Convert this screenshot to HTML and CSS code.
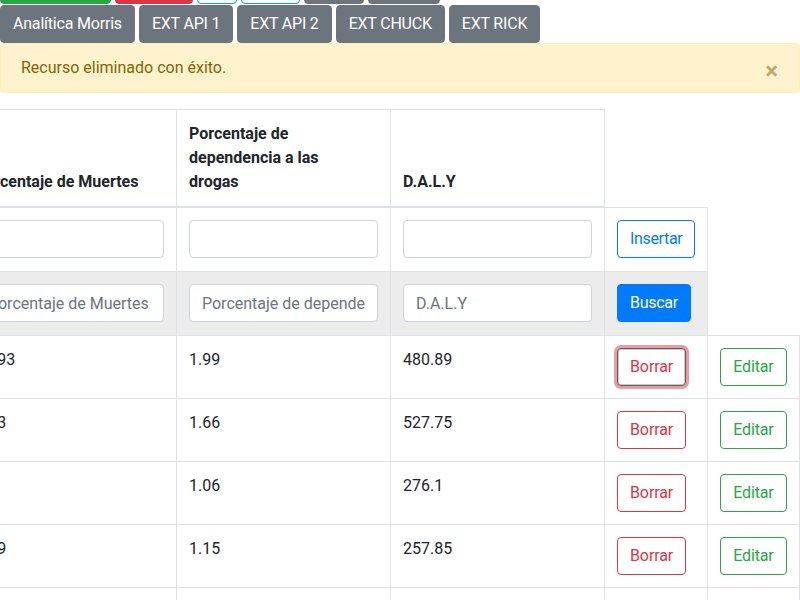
FILE: index.html
```html
<!DOCTYPE html>
<html lang="es">
<head>
<meta charset="utf-8">
<title>Drogas</title>
<link rel="stylesheet" href="styles.css">
</head>
<body>
<div class="page">
  <div class="btn-row">
    <button class="btn btn-success w-a">Inicio datos</button>
    <button class="btn btn-danger w-b">Borrar todo</button>
    <button class="btn btn-outline-info w-c">&lt;</button>
    <button class="btn btn-outline-info w-d">&gt;</button>
    <button class="btn btn-secondary w-e">Gráfica</button>
    <button class="btn btn-secondary w-f">Analítica</button>
  </div>
  <div class="btn-row">
    <button class="btn btn-secondary">Analítica Morris</button>
    <button class="btn btn-secondary">EXT API 1</button>
    <button class="btn btn-secondary">EXT API 2</button>
    <button class="btn btn-secondary">EXT CHUCK</button>
    <button class="btn btn-secondary">EXT RICK</button>
  </div>

  <div class="alert">
    <span>Recurso eliminado con éxito.</span>
    <button class="close" aria-label="Cerrar">×</button>
  </div>

  <div class="table-wrap">
    <table class="data-table">
      <thead>
        <tr>
          <th class="col-text"><span class="th-label">Porcentaje de Muertes</span></th>
          <th class="col-text"><span class="th-label">Porcentaje de dependencia a las drogas</span></th>
          <th class="col-text"><span class="th-label">D.A.L.Y</span></th>
        </tr>
      </thead>
      <tbody>
        <tr class="form-row">
          <td class="col-text"><input class="form-control" type="text"></td>
          <td class="col-text"><input class="form-control" type="text"></td>
          <td class="col-text"><input class="form-control" type="text"></td>
          <td><button class="btn btn-outline-primary">Insertar</button></td>
        </tr>
        <tr class="form-row search-row">
          <td class="col-text"><input class="form-control" type="text" placeholder="Porcentaje de Muertes"></td>
          <td class="col-text"><input class="form-control" type="text" placeholder="Porcentaje de dependencia a las drogas"></td>
          <td class="col-text"><input class="form-control" type="text" placeholder="D.A.L.Y"></td>
          <td><button class="btn btn-primary">Buscar</button></td>
        </tr>
        <tr>
          <td class="col-text">10.93</td>
          <td class="col-text">1.99</td>
          <td class="col-text">480.89</td>
          <td><button class="btn btn-outline-danger is-focused">Borrar</button></td>
          <td><button class="btn btn-outline-success">Editar</button></td>
        </tr>
        <tr>
          <td class="col-text">1.53</td>
          <td class="col-text">1.66</td>
          <td class="col-text">527.75</td>
          <td><button class="btn btn-outline-danger">Borrar</button></td>
          <td><button class="btn btn-outline-success">Editar</button></td>
        </tr>
        <tr>
          <td class="col-text">1.8</td>
          <td class="col-text">1.06</td>
          <td class="col-text">276.1</td>
          <td><button class="btn btn-outline-danger">Borrar</button></td>
          <td><button class="btn btn-outline-success">Editar</button></td>
        </tr>
        <tr>
          <td class="col-text">1.39</td>
          <td class="col-text">1.15</td>
          <td class="col-text">257.85</td>
          <td><button class="btn btn-outline-danger">Borrar</button></td>
          <td><button class="btn btn-outline-success">Editar</button></td>
        </tr>
        <tr>
          <td class="col-text">3.41</td>
          <td class="col-text">2.02</td>
          <td class="col-text">610.4</td>
          <td><button class="btn btn-outline-danger">Borrar</button></td>
          <td><button class="btn btn-outline-success">Editar</button></td>
        </tr>
      </tbody>
    </table>
  </div>
</div>
</body>
</html>
```

FILE: styles.css
```css
*, *::before, *::after {
  box-sizing: border-box;
}

html, body {
  margin: 0;
  overflow: hidden;
}

body {
  font-family: Roboto, "Liberation Sans", sans-serif;
  font-size: 16px;
  line-height: 1.5;
  color: #212529;
  background: #fff;
}

/* simulated scroll offset of the page */
.page {
  margin-top: -34px;
}

.btn-row {
  display: flex;
  gap: 4px;
}

.btn-row + .btn-row {
  margin-top: 1px;
}

.btn {
  display: inline-block;
  font-family: inherit;
  font-size: 16px;
  line-height: 1.5;
  font-weight: 400;
  padding: 6px 12px;
  border: 1px solid transparent;
  border-radius: 4px;
  background: transparent;
  text-align: center;
  white-space: nowrap;
  overflow: hidden;
  cursor: pointer;
}

.btn-row .btn-secondary {
  letter-spacing: -0.2px;
}

.w-a { width: 111px; }
.w-b { width: 78px; }
.w-c { width: 40px; }
.w-d { width: 59px; }
.w-e { width: 60px; }
.w-f { width: 72px; }

.btn-success { background: #28a745; border-color: #28a745; color: #fff; }
.btn-danger { background: #dc3545; border-color: #dc3545; color: #fff; }
.btn-secondary { background: #6c757d; border-color: #6c757d; color: #fff; }
.btn-primary { background: #007bff; border-color: #007bff; color: #fff; letter-spacing: -0.3px; }
.btn-outline-info { background: #fff; border-color: #17a2b8; color: #17a2b8; }
.btn-outline-primary { background: #fff; border-color: #007bff; color: #007bff; letter-spacing: -0.35px; }
.btn-outline-danger { background: #fff; border-color: #dc3545; color: #dc3545; letter-spacing: -0.1px; }
.btn-outline-success { background: #fff; border-color: #28a745; color: #28a745; letter-spacing: -0.15px; }

.btn-outline-danger.is-focused {
  border-color: #5e5e5e;
  box-shadow: inset 0 0 0 1px rgba(94, 94, 94, 0.35), 0 0 0 3px rgba(220, 53, 69, 0.5);
}

.alert {
  display: flex;
  justify-content: space-between;
  align-items: center;
  padding: 12px 20px;
  margin-bottom: 16px;
  border: 1px solid #ffeeba;
  border-radius: 4px;
  background: #fff3cd;
  color: #856404;
}

.close {
  height: 24px;
  padding: 3px 0 0;
  margin: 0 1px 0 0;
  border: 0;
  background: transparent;
  font-family: inherit;
  font-size: 24px;
  font-weight: 700;
  line-height: 1;
  color: #856404;
  opacity: 0.5;
  text-shadow: 0 1px 0 #fff;
  cursor: pointer;
}

.table-wrap {
  overflow: hidden;
}

.data-table {
  width: max-content;
  border-collapse: collapse;
  margin-left: -38px;
  color: #212529;
}

.data-table th,
.data-table td {
  box-sizing: content-box;
  padding: 12px;
  border: 1px solid #dee2e6;
  text-align: left;
}

.data-table th {
  vertical-align: bottom;
  font-weight: 700;
  border-bottom-width: 2px;
}

.data-table td {
  vertical-align: top;
}

.col-text {
  width: 189px;
}

.th-label {
  display: block;
  max-width: 175px;
}

.form-row td {
  padding-bottom: 13px;
}

.search-row td {
  background: #ececec;
}

.form-control {
  display: block;
  width: 100%;
  height: 38px;
  padding: 6px 12px;
  font-family: inherit;
  font-size: 16px;
  line-height: 1.5;
  color: #495057;
  background: #fff;
  border: 1px solid #ced4da;
  border-radius: 4px;
}

.form-control::placeholder {
  color: #6c757d;
  opacity: 1;
}
```
